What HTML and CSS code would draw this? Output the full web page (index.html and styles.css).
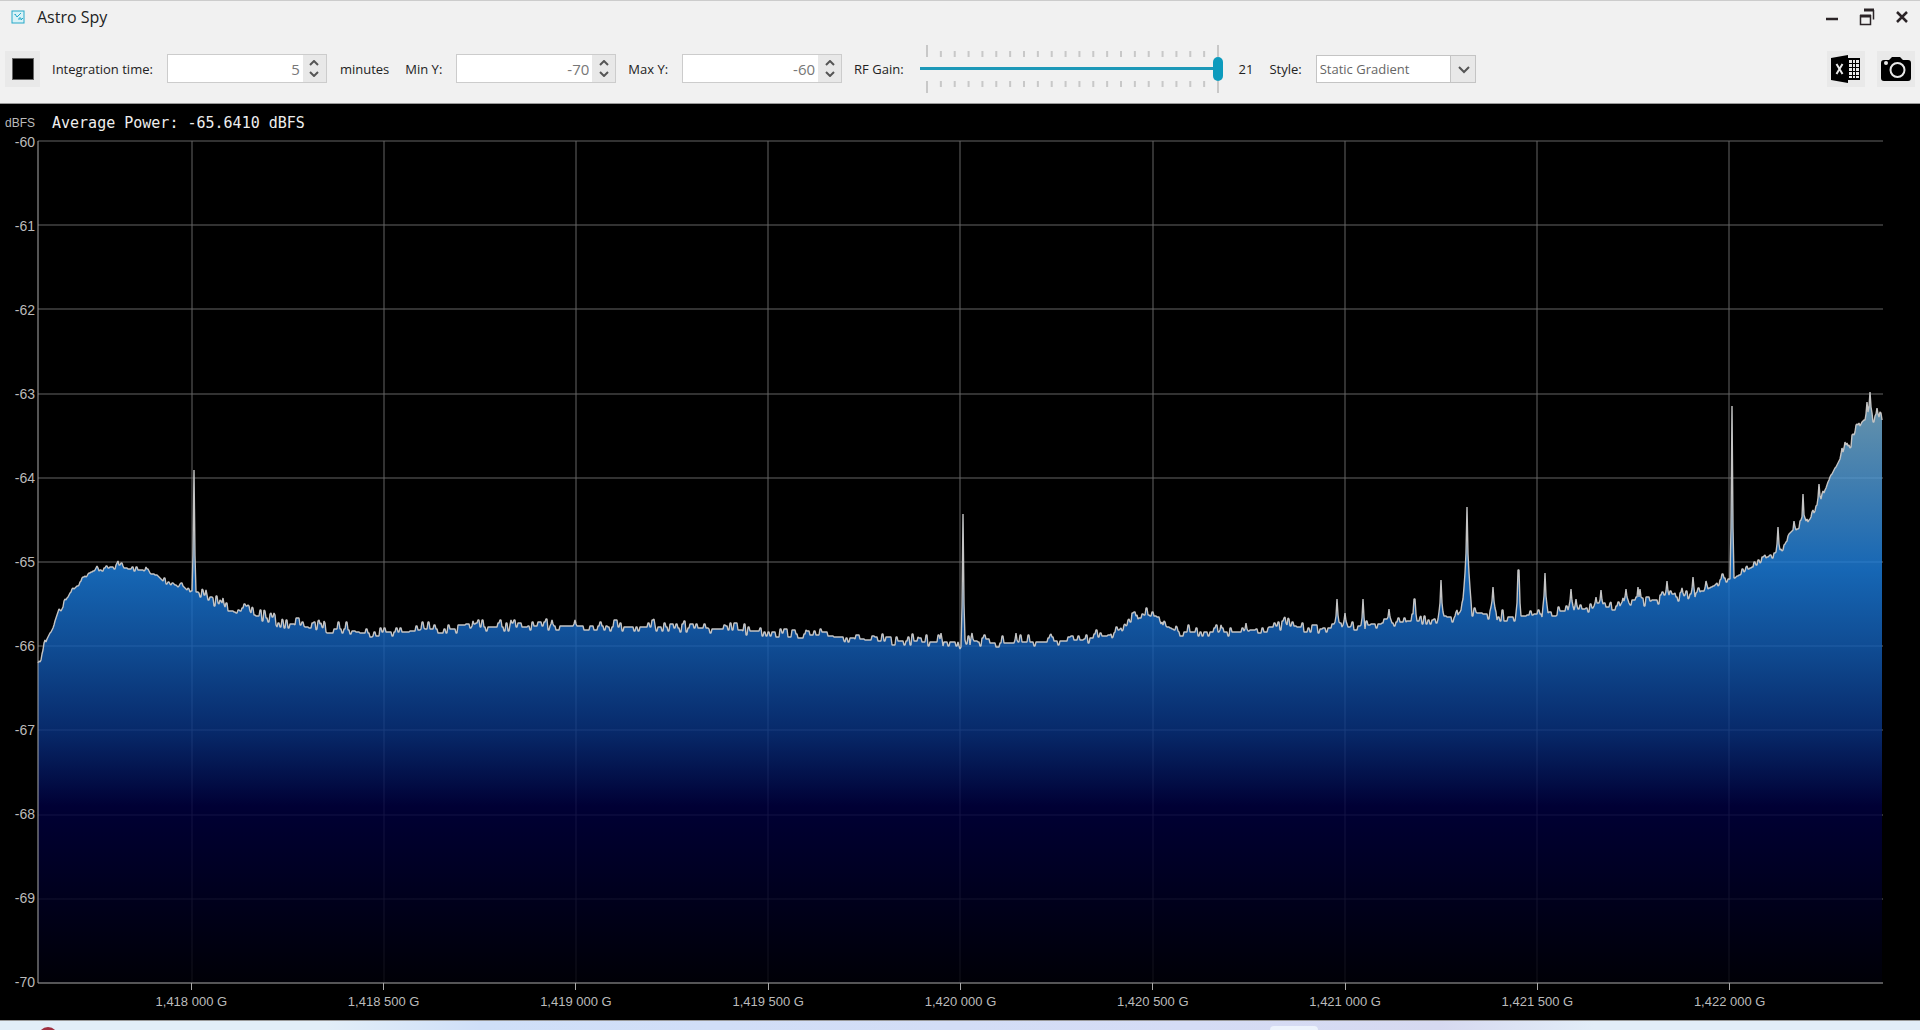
FILE: index.html
```html
<!DOCTYPE html>
<html lang="en">
<head>
    <meta charset="UTF-8">
    <meta name="viewport" content="width=device-width, initial-scale=1.0">
    <title>Astro Spy</title>
    <link rel="stylesheet" href="styles.css">
</head>
<body>
    <div class="window">
        <header class="titlebar">
            <svg class="app-icon" viewBox="0 0 14 14"><rect x="1" y="1" width="12" height="12" /><path d="M4 4l2 3 4-4M4 4v1M8 10V8h2v2l2-2" /></svg>
            <h1>Astro Spy</h1>
            <div class="window-buttons">
                <button type="button" aria-label="Minimize"><svg viewBox="0 0 16 18"><path d="M2 11h12" stroke-width="2.5" /></svg></button>
                <button type="button" aria-label="Restore"><svg viewBox="0 0 16 18"><path d="M1.500 7v9.500h10V7" /><path d="M1 8h11" stroke-width="3" /><path d="M5 2h10" stroke-width="3" /><path d="M14.500 2v9.500" /></svg></button>
                <button type="button" aria-label="Close"><svg viewBox="0 0 16 18"><path d="M3 4l10 10M13 4L3 14" stroke-width="2.500" /></svg></button>
            </div>
        </header>

        <form class="toolbar" id="settings">
            <button type="button" class="tool stop" aria-label="Stop"><span class="stop-square"></span></button>

            <label for="integration">Integration time:</label>
            <div class="spinner">
                <input type="number" id="integration" value="5">
                <div class="arrows">
                    <button type="button" aria-label="Increase"><svg viewBox="0 0 10 6"><path d="M1 5l4-4 4 4" /></svg></button>
                    <button type="button" aria-label="Decrease"><svg viewBox="0 0 10 6"><path d="M1 1l4 4 4-4" /></svg></button>
                </div>
            </div>
            <span class="unit">minutes</span>

            <label for="minY">Min Y:</label>
            <div class="spinner">
                <input type="number" id="minY" value="-70">
                <div class="arrows">
                    <button type="button" aria-label="Increase"><svg viewBox="0 0 10 6"><path d="M1 5l4-4 4 4" /></svg></button>
                    <button type="button" aria-label="Decrease"><svg viewBox="0 0 10 6"><path d="M1 1l4 4 4-4" /></svg></button>
                </div>
            </div>

            <label for="maxY">Max Y:</label>
            <div class="spinner">
                <input type="number" id="maxY" value="-60">
                <div class="arrows">
                    <button type="button" aria-label="Increase"><svg viewBox="0 0 10 6"><path d="M1 5l4-4 4 4" /></svg></button>
                    <button type="button" aria-label="Decrease"><svg viewBox="0 0 10 6"><path d="M1 1l4 4 4-4" /></svg></button>
                </div>
            </div>

            <label for="gain">RF Gain:</label>
            <div class="gain">
                <svg class="ticks" viewBox="0 0 21 12" preserveAspectRatio="none"><path d="M0 0V12M1 6V12M2 6V12M3 6V12M4 6V12M5 6V12M6 6V12M7 6V12M8 6V12M9 6V12M10 6V12M11 6V12M12 6V12M13 6V12M14 6V12M15 6V12M16 6V12M17 6V12M18 6V12M19 6V12M20 6V12M21 0V12" /></svg>
                <input type="range" id="gain" min="0" max="21" value="21">
                <svg class="ticks" viewBox="0 0 21 12" preserveAspectRatio="none"><path d="M0 0V12M1 0V6M2 0V6M3 0V6M4 0V6M5 0V6M6 0V6M7 0V6M8 0V6M9 0V6M10 0V6M11 0V6M12 0V6M13 0V6M14 0V6M15 0V6M16 0V6M17 0V6M18 0V6M19 0V6M20 0V6M21 0V12" /></svg>
            </div>
            <output for="gain" id="gainValue">21</output>

            <label for="style">Style:</label>
            <div class="combo">
                <select id="style">
                    <option>Static Gradient</option>
                </select>
                <svg viewBox="0 0 12 8"><path d="M1 1l5 5 5-5" /></svg>
            </div>

            <div class="exports">
                <button type="button" class="tool" aria-label="Export to Excel">
                    <svg viewBox="0 0 30 28">
                        <path d="M0 3L17 0v28L0 25z" />
                        <path d="M17 3h12v22H17z" />
                        <path class="light" d="M18 5h3v3h-3zM22 5h2v3h-2zM25 5h3v3h-3zM18 9h3v3h-3zM22 9h2v3h-2zM25 9h3v3h-3zM18 13h3v3h-3zM22 13h2v3h-2zM25 13h3v3h-3zM18 17h3v3h-3zM22 17h2v3h-2zM25 17h3v3h-3zM18 21h3v2h-3zM22 21h2v2h-2zM25 21h3v2h-3z" />
                        <path class="cross" d="M5.500 9l6 10M11.500 9l-6 10" />
                    </svg>
                </button>
                <button type="button" class="tool" aria-label="Screenshot">
                    <svg viewBox="0 0 30 28">
                        <path d="M3 5h5l3-3h8l3 3h5q3 0 3 3v15q0 3-3 3H3q-3 0-3-3V8q0-3 3-3z" />
                        <circle class="ring" cx="16.500" cy="15" r="7" />
                        <circle class="light" cx="5" cy="8" r="2" />
                    </svg>
                </button>
            </div>
        </form>

        <main class="chart">
            <div class="unit-y">dBFS</div>
            <div class="average">Average Power: -65.6410 dBFS</div>
            <div class="labels-y">
                <span>-60</span><span>-61</span><span>-62</span><span>-63</span><span>-64</span><span>-65</span><span>-66</span><span>-67</span><span>-68</span><span>-69</span><span>-70</span>
            </div>
            <svg class="plot" viewBox="0 0 1845 842" preserveAspectRatio="none">
                <defs>
                    <linearGradient id="power" gradientUnits="userSpaceOnUse" x1="0" y1="0" x2="0" y2="842">
                        <stop offset="0" stop-color="#ffffff" />
                        <stop offset="0.33" stop-color="#74aed2" />
                        <stop offset="0.51" stop-color="#1b7ddc" />
                        <stop offset="0.6" stop-color="#135db4" />
                        <stop offset="0.7" stop-color="#093382" />
                        <stop offset="0.79" stop-color="#000040" />
                        <stop offset="1" stop-color="#000008" />
                    </linearGradient>
                </defs>
                <path class="grid" id="grid" />
                <path class="fill" id="fill" />
                <path class="line" id="line" />
                <path class="axis" d="M0 0V842H1845" />
            </svg>
            <div class="labels-x">
                <span>1,418 000 G</span><span>1,418 500 G</span><span>1,419 000 G</span><span>1,419 500 G</span><span>1,420 000 G</span><span>1,420 500 G</span><span>1,421 000 G</span><span>1,421 500 G</span><span>1,422 000 G</span>
            </div>
        </main>
    </div>
    <div class="taskbar"><span class="task-dot"></span><span class="task-tab"></span></div>

    <script src="chart.js"></script>
</body>
</html>
```
FILE: styles.css
```css
* {
    box-sizing: border-box;
}

body {
    display: flex;
    flex-direction: column;
    min-height: 100vh;
    margin: 0;
    font-family: "Open Sans", sans-serif;
    font-size: 13px;
    color: #222;
    background-color: #000;
    overflow: hidden;
}

button {
    padding: 0;
    border: none;
    background: none;
}

.window {
    display: flex;
    flex: 1;
    flex-direction: column;
}

.titlebar {
    display: flex;
    align-items: center;
    height: 36px;
    padding: 0 10px 4px 11px;
    border-top: 1px solid #ccc;
    background-color: #f1f1f1;
}

h1 {
    margin: 0 auto 0 12px;
    font-size: 16px;
    font-weight: normal;
}

.app-icon {
    width: 14px;
    height: 14px;
    fill: #d9f2f7;
    stroke: #26a9c9;
}

.window-buttons {
    display: flex;
    gap: 19px;
}

.window-buttons svg {
    display: block;
    width: 16px;
    height: 18px;
    fill: none;
    stroke: #2b2427;
    stroke-width: 1.5;
}

.toolbar {
    display: flex;
    align-items: center;
    height: 68px;
    padding: 0 5px 2px 5px;
    border-bottom: 1px solid #999;
    background-color: #f1f1f1;
}

.toolbar label {
    margin: 0 14px 0 12px;
    white-space: nowrap;
}

.tool {
    display: flex;
    align-items: center;
    justify-content: center;
    width: 38px;
    height: 36px;
    background-color: #e9e9e9;
}

.stop {
    width: 35px;
}

.stop-square {
    width: 22px;
    height: 22px;
    border: 1px solid #666;
    background-color: #000;
}

.spinner {
    display: flex;
    width: 160px;
    height: 29px;
    border: 1px solid #ccc;
    background-color: #fff;
}

.spinner input {
    flex: 1;
    min-width: 0;
    padding: 1px 3px 0 0;
    border: none;
    background: none;
    font-family: inherit;
    font-size: 15px;
    color: #777;
    text-align: right;
    appearance: textfield;
}

.spinner input::-webkit-inner-spin-button {
    display: none;
}

.arrows {
    display: flex;
    flex-direction: column;
    justify-content: space-evenly;
    align-items: center;
    width: 23px;
    background-color: #e8e8e8;
}

.arrows svg {
    display: block;
    width: 10px;
    height: 6px;
}

.arrows svg,
.combo svg {
    fill: none;
    stroke: #555;
    stroke-width: 2;
}

.unit {
    margin-left: 13px;
}

.unit + label {
    margin-left: 16px;
}

.gain {
    display: flex;
    flex-direction: column;
    width: 303px;
    margin-left: 2px;
}

.ticks {
    height: 12px;
    margin: 0 5px 0 7px;
    overflow: visible;
    fill: none;
    stroke: #c8c8c8;
    stroke-width: 2;
}

.ticks path {
    vector-effect: non-scaling-stroke;
}

.gain input {
    width: 100%;
    height: 24px;
    margin: 0;
    background: linear-gradient(#1c98b8, #1c98b8) center / 100% 3px no-repeat;
    appearance: none;
}

.gain input::-webkit-slider-thumb {
    width: 10px;
    height: 24px;
    border-radius: 5px;
    background-color: #0d9bbd;
    appearance: none;
}

output {
    margin: 0 4px 0 16px;
}

.combo {
    position: relative;
    width: 160px;
}

.combo select {
    display: block;
    width: 100%;
    height: 28px;
    padding: 0 3px;
    border: 1px solid #c4c4c4;
    border-radius: 0;
    background: linear-gradient(#c4c4c4, #c4c4c4) right 24px top / 1px 100% no-repeat, linear-gradient(#e8e8e8, #e8e8e8) right / 24px 100% no-repeat #fff;
    font-family: inherit;
    font-size: 13px;
    color: #666;
    appearance: none;
}

.combo svg {
    position: absolute;
    top: 11px;
    right: 6px;
    width: 12px;
    height: 8px;
    pointer-events: none;
}

.exports {
    display: flex;
    gap: 12px;
    margin-left: auto;
}

.exports svg {
    width: 30px;
    height: 28px;
}

.exports .light {
    fill: #e9e9e9;
}

.ring {
    fill: none;
    stroke: #e9e9e9;
    stroke-width: 2;
}

.cross {
    stroke: #e9e9e9;
    stroke-width: 2;
}

.chart {
    display: grid;
    flex: 1;
    grid-template-columns: 38px 1fr;
    grid-template-rows: 37px 1fr 37px;
    padding-right: 37px;
    background-color: #000;
    font-family: "Liberation Sans", Arial, sans-serif;
    color: #bbb;
}

.unit-y {
    padding-top: 11px;
    padding-right: 3px;
    font-size: 12px;
    line-height: 16px;
    text-align: right;
}

.average {
    padding: 10px 0 0 14px;
    font-family: "DejaVu Sans Mono", monospace;
    font-size: 15px;
    line-height: 18px;
    color: #eee;
}

.labels-y {
    display: flex;
    flex-direction: column;
    justify-content: space-between;
    margin: -8px 3px -8px 0;
    font-size: 14px;
    line-height: 18px;
    text-align: right;
}

.plot {
    width: 100%;
    height: 100%;
    min-height: 0;
    overflow: visible;
    contain: size;
}

.plot path {
    fill: none;
    vector-effect: non-scaling-stroke;
}

.plot .grid {
    stroke: #646464;
}

.plot .fill {
    fill: url(#power);
    fill-opacity: 0.82;
}

.plot .line {
    stroke: #c4c4c4;
    stroke-width: 1.4;
    stroke-linejoin: bevel;
}

.plot .axis {
    stroke: #aaa;
}

.labels-x {
    display: grid;
    grid-column: 2;
    grid-template-columns: repeat(9, 1fr);
    padding: 0 3.1% 0 3.1%;
    line-height: 18px;
    text-align: center;
}

.labels-x span::before {
    content: "";
    display: block;
    width: 1px;
    height: 7px;
    margin: 0 auto 3px;
    background-color: #aaa;
}

.taskbar {
    display: flex;
    height: 10px;
    padding-left: 38px;
    border-top: 1px solid #999;
    background: linear-gradient(to right, #e2eef8 17%, #cfdff8 25%, #d5dcf5 62%, #d6d9f0 75%, #e2edf8 83%);
    overflow: hidden;
}

.task-dot {
    width: 20px;
    height: 20px;
    margin-top: 6px;
    border-radius: 50%;
    background-color: #a03040;
}

.task-tab {
    width: 48px;
    margin: 5px 32% 0 auto;
    border-radius: 4px 4px 0 0;
    background-color: #edf3fc;
}
```
FILE: chart.js
```js
// spectrum floor as [x, y] in plot units, 84.2 units per dB
const floor = [
    [0, 524], [3, 517], [6, 505], [10, 496], [15, 487], [18, 477], [21, 468], [23, 470], [28, 459], [32, 452],
    [37, 447], [42, 441], [49, 433], [55, 430], [59, 423], [61, 430], [66, 427], [77, 426], [80, 420], [81, 424],
    [83, 420], [85, 427], [95, 428], [105, 429], [108, 426], [111, 432], [119, 434], [125, 440], [135, 442],
    [140, 446], [144, 440], [146, 446], [151, 451], [155, 449], [158, 451], [164, 452], [170, 459], [182, 463],
    [188, 466], [195, 466], [204, 471], [210, 468], [215, 474], [229, 477], [236, 476], [239, 482], [262, 484],
    [272, 487], [284, 482], [289, 488], [307, 488], [324, 492], [345, 491], [369, 491], [385, 488], [422, 488],
    [442, 486], [537, 485], [602, 486], [662, 487], [730, 491], [762, 493], [802, 496], [842, 500], [920, 501],
    [922, 508], [927, 499], [952, 502], [1002, 501], [1042, 499], [1072, 494], [1082, 488], [1092, 477],
    [1102, 473], [1122, 476], [1125, 484], [1142, 491], [1202, 491], [1227, 487], [1247, 484], [1262, 486],
    [1277, 488], [1307, 486], [1337, 483], [1362, 481], [1402, 478], [1416, 481], [1423, 469], [1435, 471],
    [1442, 472], [1462, 476], [1477, 476], [1492, 474], [1522, 470], [1542, 468], [1562, 466], [1582, 465],
    [1597, 463], [1609, 460], [1625, 458], [1640, 456], [1656, 452], [1668, 449], [1677, 444], [1684, 437],
    [1695, 438], [1709, 429], [1722, 422], [1732, 414], [1742, 409], [1752, 396], [1759, 388], [1764, 386],
    [1767, 381], [1775, 369], [1784, 357], [1792, 336], [1800, 322], [1804, 314], [1809, 306], [1815, 300],
    [1819, 290], [1824, 281], [1830, 276], [1838, 277], [1844, 279]
];

// carriers as [x, peak y, half width]
const peaks = [
    [156, 329, 2], [168, 449, 2], [185, 457, 2], [925, 373, 2], [385, 483, 2], [435, 480, 2], [473, 479, 2],
    [514, 479, 2], [537, 479, 2], [616, 478, 2], [903, 492, 2], [934, 492, 2], [978, 492, 2], [1183, 484, 2],
    [1208, 482, 2], [1247, 476, 2], [1299, 458, 3], [1307, 472, 3], [1325, 458, 2], [1351, 468, 3],
    [1376, 458, 2], [1377, 458, 2], [1403, 439, 3], [1429, 366, 5], [1455, 446, 4], [1480, 429, 2],
    [1481, 429, 2], [1507, 432, 3], [1533, 448, 3], [1538, 458, 2], [1558, 456, 3], [1563, 449, 3],
    [1585, 457, 3], [1588, 448, 4], [1600, 446, 2], [1602, 448, 3], [1629, 440, 3], [1644, 447, 2],
    [1655, 436, 2], [1668, 440, 2], [1694, 265, 2], [1740, 386, 2], [1756, 380, 2], [1765, 353, 2],
    [1781, 343, 2], [1804, 307, 2], [1807, 301, 2], [1818, 284, 2], [1829, 261, 2], [1832, 251, 3], [1839, 267, 3]
];

let seed = 7;
function random() {
    seed = (seed * 16807) % 2147483647;
    return seed / 2147483647;
}

function floorAt(x) {
    let i = 1;
    while (i < floor.length - 1 && floor[i][0] < x) i++;
    const [x0, y0] = floor[i - 1];
    const [x1, y1] = floor[i];
    return y0 + (y1 - y0) * (x - x0) / (x1 - x0);
}

const points = [];
let noise = 0;
for (let x = 0; x <= 1844; x++) {
    const base = floorAt(x);
    if (x % 2 === 0) {
        const r = random();
        const level = x < 160 ? 0.5 : 1;
        noise = (r < 0.2 ? -4 : r < 0.26 ? -7 : r > 0.82 ? 4 : 0) * level;
    }
    let y = Math.round(base + noise);
    for (const [px, py, w] of peaks) {
        const d = Math.abs(x - px);
        if (d < w) y = Math.min(y, Math.round(py + (base - py) * Math.sqrt(d / w)));
    }
    points.push(x + " " + y);
}

const line = "M" + points.join("L");
document.getElementById("line").setAttribute("d", line);
document.getElementById("fill").setAttribute("d", line + "V842H0Z");

let grid = "";
for (let i = 0; i < 10; i++) grid += "M0 " + Math.round(i * 84.2) + "H1845";
for (let i = 0; i < 9; i++) grid += "M" + Math.round(153.5 + i * 192.2) + " 0V842";
document.getElementById("grid").setAttribute("d", grid);

document.getElementById("gain").addEventListener("input", function () {
    document.getElementById("gainValue").textContent = this.value;
});
```
